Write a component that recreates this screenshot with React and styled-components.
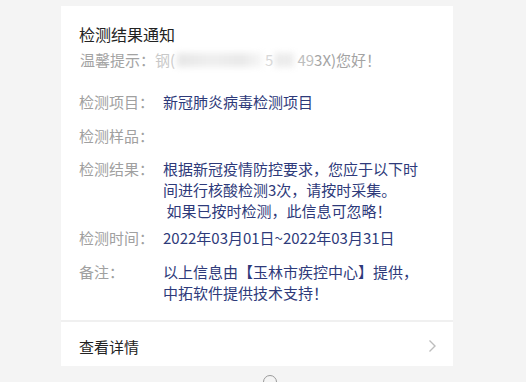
import React from "react";
import styled, { createGlobalStyle } from "styled-components";

const Global = createGlobalStyle`
  html, body { margin: 0; padding: 0; background: #f4f4f4; }
  body { font-family: "Noto Sans CJK SC", "Noto Sans", sans-serif; overflow: hidden; }
`;

const Page = styled.div`
  width: 526px;
  height: 382px;
  padding-top: 6px;
  box-sizing: border-box;
  display: flex;
  flex-direction: column;
  align-items: flex-start;
  overflow: hidden;
`;

const Card = styled.div`
  margin-left: 61px;
  width: 392px;
  background: #fff;
  display: flex;
  flex-direction: column;
  flex-shrink: 0;
`;

const Body = styled.div`
  padding: 17px 30px 17px 18px;
  display: flex;
  flex-direction: column;
`;

const Title = styled.div`
  font-size: 16px;
  line-height: 22px;
  color: #222;
`;

const Hint = styled.div`
  margin-top: 4px;
  margin-left: 1px;
  font-size: 15px;
  line-height: 22px;
  color: #a3a3a3;
  display: flex;
  align-items: center;
  white-space: nowrap;
`;

const Faint = styled.span`
  color: ${(p) => p.$c};
`;

const Blur = styled.span`
  display: inline-block;
  filter: blur(3px);
  background: linear-gradient(90deg, #e6e6e6 0%, #efefef 40%, #e9e9e9 75%, #f8f8f8 100%);
  height: 14px;
  width: ${(p) => p.$w}px;
  margin: 0 2px;
`;

const Row = styled.div`
  display: grid;
  grid-template-columns: 84px 262px;
  margin-top: ${(p) => p.$gap}px;
  font-size: 15px;
  line-height: 21px;
`;

const Label = styled.div`
  color: #a0a0a0;
`;

const Value = styled.div`
  color: #2e3a7a;
`;

const Footer = styled.div`
  border-top: 2px solid #f0f0f0;
  height: 46px;
  padding: 4px 16px 0 18px;
  display: flex;
  align-items: center;
  justify-content: space-between;
  font-size: 15px;
  color: #222;
  box-sizing: border-box;
`;

const Dot = styled.div`
  margin-left: 263px;
  margin-top: 9px;
  width: 12px;
  height: 12px;
  flex-shrink: 0;
  border: 1.5px solid #9a9a9a;
  border-radius: 50%;
`;

const Chevron = () => (
  <svg width="9" height="14" viewBox="0 0 9 14">
    <path d="M1.5 1.5 L7 7 L1.5 12.5" fill="none" stroke="#bdbdbd" strokeWidth="1.4" />
  </svg>
);

export default function App() {
  return (
    <>
      <Global />
      <Page>
        <Card>
          <Body>
            <Title>检测结果通知</Title>
            <Hint>
              温馨提示：<Faint $c="#c9c9c9">钢(</Faint>
              <Blur $w={86} />
              <Faint $c="#d6d6d6">5</Faint>
              <Blur $w={20} />
              <Faint $c="#bdbdbd">49</Faint>3X)您好！
            </Hint>
            <Row $gap={20}>
              <Label>检测项目：</Label>
              <Value>新冠肺炎病毒检测项目</Value>
            </Row>
            <Row $gap={13}>
              <Label>检测样品：</Label>
              <Value></Value>
            </Row>
            <Row $gap={12}>
              <Label>检测结果：</Label>
              <Value>
                根据新冠疫情防控要求，您应于以下时间进行核酸检测3次，请按时采集。
                <br />
                {"\u00a0"}如果已按时检测，此信息可忽略！
              </Value>
            </Row>
            <Row $gap={6}>
              <Label>检测时间：</Label>
              <Value>2022年03月01日~2022年03月31日</Value>
            </Row>
            <Row $gap={13}>
              <Label>备注：</Label>
              <Value>以上信息由【玉林市疾控中心】提供，中拓软件提供技术支持！</Value>
            </Row>
          </Body>
          <Footer>
            <span>查看详情</span>
            <Chevron />
          </Footer>
        </Card>
        <Dot />
      </Page>
    </>
  );
}
